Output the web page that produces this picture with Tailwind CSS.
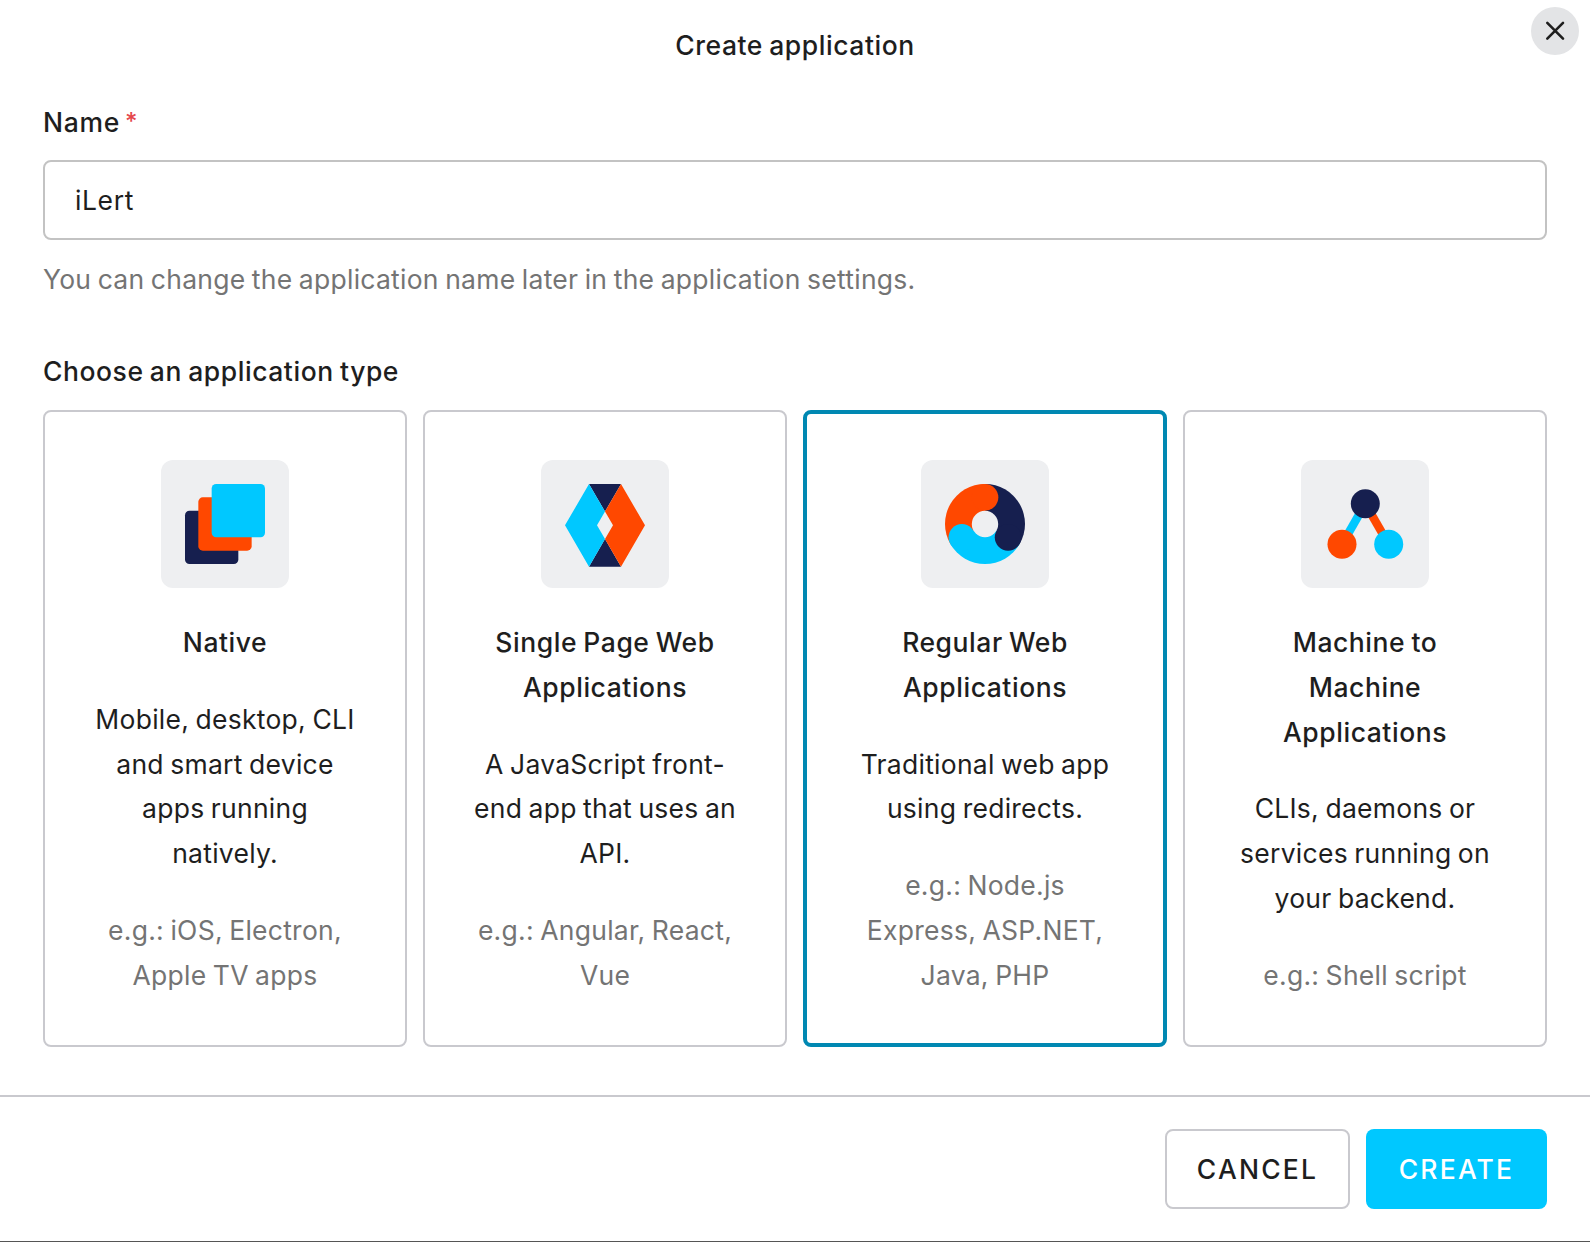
<!DOCTYPE html>
<html lang="en">
<head>
<meta charset="utf-8">
<title>Create application</title>
<script src="https://cdn.jsdelivr.net/npm/@tailwindcss/browser@4"></script>
</head>
<body class="bg-white">
<main class="relative flex h-[1242px] w-[1590px] flex-col overflow-hidden border-b border-[#555555] bg-white font-['Inter',sans-serif] text-[26.5px] leading-8 tracking-[0.26px] text-[#1e1e1e] [word-spacing:-1.3px]">
  <header class="flex h-[106px] justify-center pt-[29px]">
    <h1 class="font-medium tracking-[0.55px]">Create application</h1>
    <button aria-label="Close" class="absolute top-[7px] left-[1531px] flex size-12 rounded-full bg-[#e3e4e6]">
      <svg class="size-12" viewBox="0 0 48 48" fill="none" stroke="#1e1e1e" stroke-width="2.6" stroke-linecap="round"><path d="M16.3 15.9 32 31.6M32 15.9 16.3 31.6"/></svg>
    </button>
  </header>

  <section class="flex flex-col px-[43px]">
    <label for="name" class="flex h-[54px] gap-[5px] font-medium"><span class="tracking-[0.7px]">Name</span><span class="text-[24px] font-medium text-[#e5484d]">*</span></label>
    <input id="name" value="iLert" class="h-20 rounded-lg border-2 border-[#c3c3c3] px-[30px] tracking-[0.6px] outline-none">
    <p class="mt-[23px] text-[#747474]">You can change the application name later in the application settings.</p>
    <h2 class="mt-[60px] h-[55px] font-medium tracking-[0.55px]">Choose an application type</h2>

    <div class="grid grid-cols-4 gap-4 text-center leading-[44.8px] whitespace-nowrap">
      <article class="flex h-[637px] flex-col items-center gap-8 rounded-lg border-2 border-[#c9c9ce] pt-12">
        <svg class="size-32 shrink-0 rounded-xl bg-[#eeeff1]" viewBox="0 0 128 128">
          <rect x="24" y="50.67" width="53.33" height="53.33" rx="4.5" fill="#161f4f"/>
          <rect x="37.33" y="37.33" width="53.33" height="53.33" rx="4.5" fill="#ff4800"/>
          <rect x="50.67" y="24" width="53.33" height="53.33" rx="4.5" fill="#00c8ff"/>
        </svg>
        <h3 class="font-medium tracking-[0.55px]">Native</h3>
        <p>Mobile, desktop, CLI<br>and smart device<br>apps running<br>natively.</p>
        <p class="text-[#747474]">e.g.: iOS, Electron,<br>Apple TV apps</p>
      </article>
      <article class="flex h-[637px] flex-col items-center gap-8 rounded-lg border-2 border-[#c9c9ce] pt-12">
        <svg class="size-32 shrink-0 rounded-xl bg-[#eeeff1]" viewBox="0 0 128 128">
          <path d="M48 24H80L64 51.5ZM48 106.7H80L64 79Z" fill="#161f4f"/>
          <path d="M48 24 64 51.5 56 65.3 64 79 48 106.7 24 65.3Z" fill="#00c8ff"/>
          <path d="M80 24 64 51.5 72 65.3 64 79 80 106.7 104 65.3Z" fill="#ff4800"/>
        </svg>
        <h3 class="font-medium tracking-[0.55px]">Single Page Web<br>Applications</h3>
        <p>A JavaScript front-<br>end app that uses an<br>API.</p>
        <p class="text-[#747474]">e.g.: Angular, React,<br>Vue</p>
      </article>
      <article class="flex h-[637px] flex-col items-center gap-8 rounded-lg border-4 border-[#0088b2] pt-[46px]">
        <svg class="size-32 shrink-0 rounded-xl bg-[#eeeff1]" viewBox="0 0 128 128">
          <path d="M64 64V24A40 40 0 0 0 29.36 84Z" fill="#ff4800"/>
          <path d="M64 64V24A40 40 0 0 1 98.64 84Z" fill="#161f4f"/>
          <path d="M64 64 98.64 84A40 40 0 0 1 29.36 84Z" fill="#00c8ff"/>
          <circle cx="64" cy="37.33" r="13.33" fill="#ff4800"/>
          <circle cx="87.1" cy="77.33" r="13.33" fill="#161f4f"/>
          <circle cx="40.9" cy="77.33" r="13.33" fill="#00c8ff"/>
          <circle cx="64" cy="64" r="13.2" fill="#eeeff1"/>
        </svg>
        <h3 class="font-medium tracking-[0.55px]">Regular Web<br>Applications</h3>
        <p>Traditional web app<br>using redirects.</p>
        <p class="text-[#747474]">e.g.: Node.js<br>Express, ASP.NET,<br>Java, PHP</p>
      </article>
      <article class="flex h-[637px] flex-col items-center gap-8 rounded-lg border-2 border-[#c9c9ce] pt-12">
        <svg class="size-32 shrink-0 rounded-xl bg-[#eeeff1]" viewBox="0 0 128 128">
          <path d="M64.3 43.7 41 84.3" stroke="#00c8ff" stroke-width="8.4"/>
          <path d="M64.3 43.7 87.7 84.3" stroke="#ff4800" stroke-width="8.4"/>
          <circle cx="64.3" cy="43.7" r="14.5" fill="#161f4f"/>
          <circle cx="41" cy="84.3" r="14.5" fill="#ff4800"/>
          <circle cx="87.7" cy="84.3" r="14.5" fill="#00c8ff"/>
        </svg>
        <h3 class="font-medium tracking-[0.55px]">Machine to<br>Machine<br>Applications</h3>
        <p>CLIs, daemons or<br>services running on<br>your backend.</p>
        <p class="text-[#747474]">e.g.: Shell script</p>
      </article>
    </div>
  </section>

  <footer class="mt-12 flex justify-end gap-4 border-t-2 border-[#c9c9ce] px-[43px] pt-8">
    <button class="h-20 w-[185px] rounded-lg border-2 border-[#c9c9ce] font-medium tracking-[2.2px]">CANCEL</button>
    <button class="h-20 w-[181px] rounded-lg bg-[#00c8ff] font-medium tracking-[2.2px] text-white">CREATE</button>
  </footer>
</main>
</body>
</html>
